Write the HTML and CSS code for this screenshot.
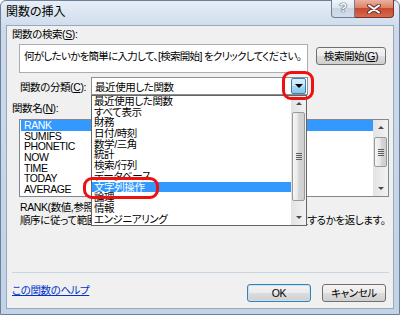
FILE: index.html
```html
<!DOCTYPE html>
<html lang="ja">
<head>
  <meta charset="UTF-8">
  <title>関数の挿入</title>
  <link rel="stylesheet" href="styles.css">
</head>
<body>
  <div class="window">
    <div class="titlebar">
      <span class="title">関数の挿入</span>
      <div class="caption-btns">
        <div class="cap-help">?</div>
        <div class="cap-close">
          <svg width="16" height="10" viewBox="0 0 16 10">
            <path d="M3 1.5 L13 8.5 M13 1.5 L3 8.5" stroke="#6b3a33" stroke-width="4" stroke-linecap="round"/>
            <path d="M3 1.5 L13 8.5 M13 1.5 L3 8.5" stroke="#fff" stroke-width="2" stroke-linecap="round"/>
          </svg>
        </div>
      </div>
    </div>

    <div class="client">
      <div class="label">関数の検索(<u>S</u>):</div>
      <div class="search-row">
        <div class="search-box">何がしたいかを簡単に入力して、[検索開始] をクリックしてください。</div>
        <button class="btn search-btn">検索開始(<u>G</u>)</button>
      </div>

      <div class="cat-row">
        <span class="cat-label">関数の分類(<u>C</u>):</span>
        <div class="combo">
          <span class="combo-text">最近使用した関数</span>
          <div class="combo-btn"><i class="arrow-down big"></i></div>
        </div>
      </div>

      <div class="label name-label">関数名(<u>N</u>):</div>
      <div class="listbox">
        <ul class="items">
          <li class="sel">RANK</li>
          <li>SUMIFS</li>
          <li>PHONETIC</li>
          <li>NOW</li>
          <li>TIME</li>
          <li>TODAY</li>
          <li>AVERAGE</li>
        </ul>
        <div class="vscroll">
          <div class="sb-btn"><i class="arrow-up"></i></div>
          <div class="sb-track">
            <div class="thumb list-thumb"><i class="grip"></i></div>
          </div>
          <div class="sb-btn"><i class="arrow-down"></i></div>
        </div>
      </div>

      <div class="desc">
        <p>RANK(数値,参照,順序)</p>
        <p>順序に従って範囲内の数値を並べ替えたとき、数値が何番目に位置するかを返します。</p>
      </div>

      <div class="separator"></div>

      <div class="footer">
        <a class="help-link" href="#">この関数のヘルプ</a>
        <button class="btn default">OK</button>
        <button class="btn cancel">キャンセル</button>
      </div>
    </div>

    <!-- open drop-down of 関数の分類 -->
    <div class="dropdown">
      <ul class="drop-items">
        <li>最近使用した関数</li>
        <li>すべて表示</li>
        <li>財務</li>
        <li>日付/時刻</li>
        <li>数学/三角</li>
        <li>統計</li>
        <li>検索/行列</li>
        <li>データベース</li>
        <li class="sel">文字列操作</li>
        <li>論理</li>
        <li>情報</li>
        <li>エンジニアリング</li>
      </ul>
      <div class="vscroll">
        <div class="sb-btn"><i class="arrow-up"></i></div>
        <div class="sb-track">
          <div class="thumb drop-thumb"><i class="grip"></i></div>
        </div>
        <div class="sb-btn"><i class="arrow-down"></i></div>
      </div>
    </div>

    <!-- red annotation marks -->
    <div class="mark mark-btn"></div>
    <div class="mark mark-item"></div>
  </div>
</body>
</html>
```

FILE: styles.css
```css
body {
  margin: 0;
  font-family: "Liberation Sans", "Noto Sans CJK JP", sans-serif;
  font-size: 10.5px;
  letter-spacing: -0.4px;
  font-feature-settings: "palt";
  color: #000;
}
ul, p {
  margin: 0;
  padding: 0;
  list-style: none;
}
.window {
  position: relative;
  width: 400px;
  height: 315px;
  box-sizing: border-box;
  border: 1px solid #6e8097;
  border-radius: 6px 6px 0 0;
  background: linear-gradient(#e6eef7, #cbd9ea 30px, #c2d3e7);
  padding: 0 5px 5px;
  display: flex;
  flex-direction: column;
}
.titlebar {
  height: 24px;
  display: flex;
  align-items: flex-start;
}
.title {
  margin: 4px 0 0 0;
  font-size: 12px;
  line-height: 14px;
  letter-spacing: 0;
}
.caption-btns {
  margin: -1px 0 0 auto;
  display: flex;
}
.cap-help {
  width: 24px;
  height: 18px;
  box-sizing: border-box;
  border: 1px solid #6f7f93;
  border-top: none;
  border-radius: 0 0 0 4px;
  background: linear-gradient(#f1f5fa, #dbe4ef 50%, #c8d5e4 50%, #d3deeb);
  color: #fff;
  font-size: 13px;
  font-weight: bold;
  line-height: 16px;
  text-align: center;
  text-shadow: 0 0 1px #3d4b5c, 0 0 1px #3d4b5c, 0 0 1px #3d4b5c;
}
.cap-close {
  width: 39px;
  height: 18px;
  box-sizing: border-box;
  border: 1px solid #7a3328;
  border-top: none;
  border-left: none;
  border-radius: 0 0 4px 0;
  background: linear-gradient(#eab19e, #dd7c62 50%, #c94a2f 50%, #d66a4b);
  display: flex;
  align-items: center;
  justify-content: center;
}
.client {
  flex: 1;
  background: #f0f0f0;
  border: 1px solid #98a9bd;
  padding: 0 4px 0 5px;
}
.label {
  line-height: 12px;
  margin-top: 2px;
}
.search-row {
  display: flex;
  align-items: flex-start;
  margin-top: 4px;
  padding-left: 7px;
}
.search-box {
  width: 289px;
  height: 29px;
  box-sizing: border-box;
  border: 1px solid #abadb3;
  background: #fff;
  padding: 5px 0 0 4px;
  line-height: 12px;
  letter-spacing: -0.7px;
  white-space: nowrap;
  overflow: hidden;
}
.btn {
  height: 18px;
  box-sizing: border-box;
  border: 1px solid #707070;
  border-radius: 3px;
  background: linear-gradient(#f3f3f3, #ebebeb 50%, #dddddd 50%, #cfcfcf);
  font: inherit;
  letter-spacing: inherit;
  line-height: 14px;
  padding: 0;
  color: #000;
}
.search-btn {
  width: 70px;
  margin: 3px 3px 0 auto;
}
.cat-row {
  display: flex;
  align-items: center;
  margin-top: 4px;
  padding-left: 8px;
  height: 18px;
}
.cat-label {
  width: 71px;
  white-space: nowrap;
}
.combo {
  width: 217px;
  height: 18px;
  box-sizing: border-box;
  border: 1px solid #8e8f8f;
  background: #fff;
  display: flex;
  align-items: center;
}
.combo-text {
  flex: 1;
  padding-left: 3px;
}
.combo-btn {
  width: 15px;
  height: 16px;
  box-sizing: border-box;
  margin-right: 1px;
  border: 1px solid #3c7fb1;
  border-radius: 2px;
  background: linear-gradient(#d9f0fc, #bee6fd 50%, #a7d9f5 50%, #8cc6e8);
  display: flex;
  align-items: center;
  justify-content: center;
}
.name-label {
  margin-top: 7px;
}
.listbox {
  margin: 5px 0 0 7px;
  height: 78px;
  box-sizing: border-box;
  border: 1px solid #828790;
  background: #fff;
  display: flex;
}
.items {
  flex: 1;
  padding-left: 1px;
}
.items li, .drop-items li {
  line-height: 10.7px;
  height: 10.7px;
  padding-left: 2px;
  white-space: nowrap;
}
.items li {
  padding-left: 3px;
}
.items li.sel, .drop-items li.sel {
  position: relative;
  background: #3399ff;
  color: #fff;
}
.vscroll {
  width: 15px;
  display: flex;
  flex-direction: column;
  background: linear-gradient(to right, #e3e3e3, #f2f2f2);
}
.sb-btn {
  height: 15px;
  display: flex;
  align-items: center;
  justify-content: center;
}
.sb-track {
  flex: 1;
}
.thumb {
  margin: 0 1px;
  box-sizing: border-box;
  border: 1px solid #999;
  border-radius: 2px;
  background: linear-gradient(to right, #f6f6f6, #e6e6e6 50%, #d6d6d6 50%, #cfcfcf);
  display: flex;
  align-items: center;
  justify-content: center;
}
.list-thumb {
  margin-top: 2px;
  height: 30px;
}
.drop-thumb {
  margin-top: 1px;
  height: 89px;
}
.grip {
  width: 6px;
  height: 7px;
  background: repeating-linear-gradient(#5e5e5e 0 1px, transparent 1px 2px);
}
.arrow-up, .arrow-down {
  width: 0;
  height: 0;
  border-left: 3px solid transparent;
  border-right: 3px solid transparent;
}
.arrow-up {
  border-bottom: 3px solid #4a4a4a;
}
.arrow-down {
  border-top: 3px solid #4a4a4a;
}
.arrow-down.big {
  border-left-width: 4px;
  border-right-width: 4px;
  border-top: 4px solid #000;
}
.desc {
  margin: 4px 0 0 8px;
  line-height: 13px;
  white-space: nowrap;
}
.separator {
  margin-top: 45px;
  height: 1px;
  background: #c8d6e4;
}
.footer {
  display: flex;
  align-items: center;
  margin-top: 11px;
  padding-right: 3px;
  height: 18px;
}
.help-link {
  align-self: flex-start;
  line-height: 12px;
  color: #0033cc;
  text-decoration: underline;
}
.footer .btn {
  width: 64px;
}
.default {
  margin-left: auto;
  border-color: #3c7fb1;
  box-shadow: inset 0 0 0 1px #bfe3f7;
}
.cancel {
  margin-left: 11px;
}
.dropdown {
  position: absolute;
  left: 90px;
  top: 94px;
  width: 216px;
  height: 131px;
  box-sizing: border-box;
  border: 1px solid #646464;
  background: #fff;
  display: flex;
}
.drop-items {
  flex: 1;
}
.mark {
  position: absolute;
  box-sizing: border-box;
  border: 3px solid #ee1111;
  border-radius: 9px;
}
.mark-btn {
  left: 281px;
  top: 70px;
  width: 32px;
  height: 29px;
}
.mark-item {
  left: 82px;
  top: 176px;
  width: 76px;
  height: 22px;
}
```
